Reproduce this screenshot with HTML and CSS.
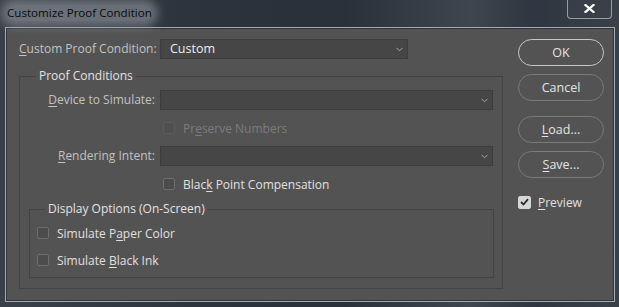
FILE: index.html
```html
<!DOCTYPE html>
<html>
<head>
<meta charset="utf-8">
<link rel="stylesheet" href="styles.css">
</head>
<body>
<div class="window">
  <div class="titlebar">
    <span class="title">Customize Proof Condition</span>
    <div class="close"><svg width="11" height="9" viewBox="0 0 11 9"><path d="M1.5 1 L9.5 8 M9.5 1 L1.5 8" stroke="#fff" stroke-width="2.3" stroke-linecap="square"/></svg></div>
  </div>
  <div class="client">
    <div class="main">
      <div class="toprow">
        <span class="lbl first"><u>C</u>ustom Proof Condition:</span>
        <div class="select wide"><span class="val">Custom</span><svg class="chev" width="7" height="5" viewBox="0 0 7 5"><path d="M0.5 0.8 L3.5 3.8 L6.5 0.8" fill="none" stroke="#a8a8a8" stroke-width="1"/></svg></div>
      </div>
      <fieldset class="group outer">
        <legend>Proof Conditions</legend>
        <div class="grid">
          <span class="lbl r"><u>D</u>evice to Simulate:</span>
          <div class="select"><span class="val"></span><svg class="chev" width="7" height="5" viewBox="0 0 7 5"><path d="M0.5 0.8 L3.5 3.8 L6.5 0.8" fill="none" stroke="#a8a8a8" stroke-width="1"/></svg></div>
          <span></span>
          <div class="check ind disabled"><span class="box"></span><span>Pr<u>e</u>serve Numbers</span></div>
          <span class="lbl r"><u>R</u>endering Intent:</span>
          <div class="select"><span class="val"></span><svg class="chev" width="7" height="5" viewBox="0 0 7 5"><path d="M0.5 0.8 L3.5 3.8 L6.5 0.8" fill="none" stroke="#a8a8a8" stroke-width="1"/></svg></div>
          <span></span>
          <div class="check ind"><span class="box"></span><span>Blac<u>k</u> Point Compensation</span></div>
        </div>
        <fieldset class="group inner">
          <legend>Display Options (On-Screen)</legend>
          <div class="check"><span class="box"></span><span>Simulate P<u>a</u>per Color</span></div>
          <div class="check second"><span class="box"></span><span>Simulate <u>B</u>lack Ink</span></div>
        </fieldset>
      </fieldset>
    </div>
    <div class="side">
      <div class="btn default">OK</div>
      <div class="btn gap8">Cancel</div>
      <div class="btn gap15"><u>L</u>oad...</div>
      <div class="btn gap8"><u>S</u>ave...</div>
      <div class="check preview"><span class="box on"><svg width="9" height="8" viewBox="0 0 9 8"><path d="M1 4 L3.5 6.5 L8 1.2" fill="none" stroke="#2a2a2a" stroke-width="1.8"/></svg></span><span><u>P</u>review</span></div>
    </div>
  </div>
</div>
</body>
</html>
```
FILE: styles.css
```css
* { box-sizing: border-box; }
html, body { margin: 0; padding: 0; }
body {
  width: 619px; height: 307px; overflow: hidden;
  background: #2b313a;
  font-family: "Open Sans", "Noto Sans", sans-serif;
  font-size: 12px;
}
.window {
  width: 619px; height: 307px;
  background: linear-gradient(90deg, #3a4049 0%, #2e343d 30%, #2a303a 55%, #3f464f 76%, #303641 86%, #3a4048 100%);
}
.titlebar {
  height: 27px;
  display: flex;
  justify-content: space-between;
  align-items: flex-start;
}
.title {
  margin-left: 7px;
  margin-top: 5px;
  line-height: 16px;
  font-family: "Open Sans", sans-serif;
  font-size: 11.6px;
  color: #0a0a0a;
  background: rgba(150,156,164,0.55);
  border-radius: 8px;
  box-shadow: 0 0 10px 6px rgba(150,156,164,0.55);
}
.close {
  width: 45px; height: 19px;
  margin-right: 7px;
  border: 1px solid #959da7;
  border-top: none;
  border-radius: 0 0 4px 4px;
  background: rgba(60,66,76,0.5);
  display: flex; align-items: center; justify-content: center;
  padding-bottom: 1px;
}
.client {
  margin-left: 5px;
  width: 610px; height: 275px;
  border: 1px solid #a3abb4;
  box-shadow: inset 0 0 0 1px #30343a;
  background: #535353;
  padding: 11px 0 0 13px;
  display: flex;
  align-items: flex-start;
}
.main { width: 484px; }
.toprow { display: flex; height: 20px; }
.lbl {
  color: #c2c2c2;
  line-height: 20px;
  white-space: nowrap;
}
.lbl.first { width: 141px; }
.lbl.r { text-align: right; }
u { text-decoration: underline; text-underline-offset: 2px; }
.select {
  height: 20px;
  background: #464646;
  border: 1px solid #3d3d3d;
  display: flex; align-items: center; justify-content: space-between;
  padding: 0 4px 0 9px;
}
.select.wide { width: 248px; }
.val { color: #ececec; font-size: 12.5px; line-height: 18px; }
.chev { display: block; }
.group {
  margin: 10px 0 0;
  border: 1px solid #434343;
  min-width: 0;
}
.group legend {
  color: #e2e2e2;
  font-size: 12px;
  line-height: 14px;
  padding: 0 3px;
}
.outer { padding: 7px 8px 10px 9px; }
.outer > legend { margin-left: 7px; }
.inner { margin-top: 8px; padding: 7px 7px 7px 7px; }
.inner > legend { margin-left: 8px; }
.grid {
  display: grid;
  grid-template-columns: 126px 333px;
  grid-auto-rows: 20px;
  column-gap: 5px;
  row-gap: 8px;
}
.check {
  display: flex; align-items: center;
  height: 20px;
  color: #e0e0e0;
  gap: 8px;
  white-space: nowrap;
}
.check.ind { padding-left: 3px; }
.check.second { margin-top: 7px; }
.box {
  width: 12px; height: 12px;
  border: 1px solid #6e6e6e;
  border-radius: 2px;
  background: #4c4c4c;
  flex: none;
  display: flex; align-items: center; justify-content: center;
}
.check.disabled { color: #7c7c7c; }
.check.disabled .box { border-color: #5c5c5c; background: #505050; }
.side {
  margin-left: 15px;
  width: 86px;
  display: flex; flex-direction: column;
}
.btn {
  height: 27px;
  border: 1px solid #7a7a7a;
  border-radius: 14px;
  color: #e4e4e4;
  font-size: 12.5px;
  display: flex; align-items: center; justify-content: center;
  padding-bottom: 1px;
}
.btn.default { border-color: #c8c8c8; }
.gap8 { margin-top: 8px; }
.gap15 { margin-top: 15px; }
.preview { margin-top: 14px; gap: 7px; }
.box.on {
  width: 13px; height: 13px;
  background: #d6d6d6;
  border-color: #d6d6d6;
}
```
